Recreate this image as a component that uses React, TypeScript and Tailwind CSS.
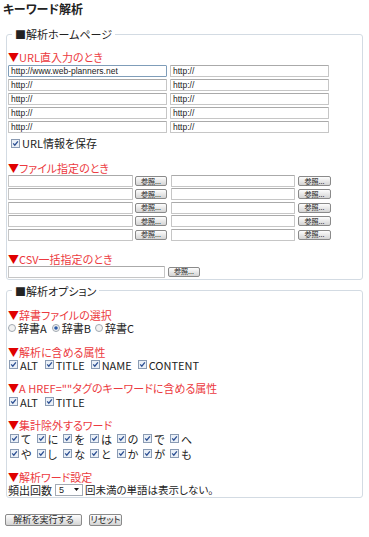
import React from "react";

function CheckBox() {
  return (
    <svg width="9" height="9" viewBox="0 0 9 9" className="shrink-0">
      <rect x="0.5" y="0.5" width="8" height="8" fill="#eaf0f7" stroke="#8a9bb3" />
      <path d="M2.2 4.4 L3.8 6.2 L6.9 2.4" fill="none" stroke="#2c4f93" strokeWidth="1.3" />
    </svg>
  );
}

function Radio({ on = false }: { on?: boolean }) {
  return (
    <svg width="8" height="8" viewBox="0 0 8 8" className="shrink-0">
      <circle cx="4" cy="4" r="3.5" fill="#f2f2f2" stroke="#a0a8b0" />
      {on && <circle cx="4" cy="4" r="1.8" fill="#2858a6" />}
    </svg>
  );
}

function Heading({ children, className = "" }: { children: React.ReactNode; className?: string }) {
  return (
    <div className={`h-[14px] leading-[14px] text-[11px] text-[#ec3a40] whitespace-nowrap ${className}`}>
      <span className="text-[#e00000]">▼</span>
      {children}
    </div>
  );
}

function TextBox({ className = "", value = "", focus = false }: { className?: string; value?: string; focus?: boolean }) {
  return (
    <div
      className={`h-[12px] shrink-0 border rounded-[1px] bg-white flex items-center pl-[2px] text-[8.5px] leading-none text-[#222] font-['Liberation_Sans',sans-serif] whitespace-nowrap overflow-hidden ${
        focus ? "border-[#7f9db9]" : "border-[#c6c6c6] border-t-[#aaaaaa]"
      } ${className}`}
    >
      {value}
    </div>
  );
}

function Btn({ children, className = "" }: { children: React.ReactNode; className?: string }) {
  return (
    <div
      className={`shrink-0 border border-[#8a8a8a] rounded-[2px] bg-linear-to-b from-[#fdfdfd] to-[#d4d4d4] flex items-center justify-center leading-none text-[#222] whitespace-nowrap ${className}`}
    >
      {children}
    </div>
  );
}

function FileRow() {
  return (
    <div className="flex h-[12px] items-center">
      <TextBox className="w-[125px]" />
      <Btn className="ml-[2px] w-[32px] h-[10px] text-[7px]">参照...</Btn>
      <TextBox className="ml-[4px] w-[124px]" />
      <Btn className="ml-[3px] w-[33px] h-[10px] text-[7px]">参照...</Btn>
    </div>
  );
}

function CheckLabel({ label, className = "" }: { label: string; className?: string }) {
  return (
    <div className={`flex items-center ${className}`}>
      <CheckBox />
      <span className="ml-[2px] text-[11px] leading-[12px]">{label}</span>
    </div>
  );
}

const row1 = ["て", "に", "を", "は", "の", "で", "へ"];
const row2 = ["や", "し", "な", "と", "か", "が", "も"];

export default function App() {
  return (
    <div className="w-[369px] h-[537px] bg-white text-[#222] font-['Noto_Sans_CJK_JP',sans-serif] [font-feature-settings:'palt'] overflow-hidden">
      <div className="h-[18px] pt-[1px] pl-[3px] text-[12px] font-bold leading-[16px]">キーワード解析</div>

      <fieldset className="mt-[9px] ml-[6px] w-[357px] border border-[#d3dbe3] rounded-[3px] pl-[1px] pb-[1px]">
        <legend className="ml-[4px] px-[3px] text-[11px] leading-[14px]">■解析ホームページ</legend>
        <Heading className="mt-[9px]">URL直入力のとき</Heading>
        <div className="mt-[1px] grid grid-cols-[159px_159px] gap-x-[3px] gap-y-[2px]">
          <TextBox focus value="http://www.web-planners.net" />
          <TextBox value="http://" />
          <TextBox value="http://" />
          <TextBox value="http://" />
          <TextBox value="http://" />
          <TextBox value="http://" />
          <TextBox value="http://" />
          <TextBox value="http://" />
          <TextBox value="http://" />
          <TextBox value="http://" />
        </div>
        <CheckLabel label="URL情報を保存" className="mt-[4px] ml-[3px] h-[12px]" />

        <Heading className="mt-[12px]">ファイル指定のとき</Heading>
        <div className="flex flex-col gap-[1.4px]">
          <FileRow />
          <FileRow />
          <FileRow />
          <FileRow />
          <FileRow />
        </div>

        <Heading className="mt-[11px]">CSV一括指定のとき</Heading>
        <div className="flex h-[12px] items-center">
          <TextBox className="w-[157px]" />
          <Btn className="ml-[3px] w-[32px] h-[10px] text-[7px]">参照...</Btn>
        </div>
      </fieldset>

      <fieldset className="mt-[4px] ml-[6px] w-[357px] border border-[#d3dbe3] rounded-[3px] pl-[1px] pb-[1px]">
        <legend className="ml-[4px] px-[3px] text-[11px] leading-[14px]">■解析オプション</legend>

        <Heading className="mt-[10px]">辞書ファイルの選択</Heading>
        <div className="flex h-[12px] items-center text-[11px] leading-[12px]">
          <Radio />
          <span className="ml-[2px]">辞書A</span>
          <span className="ml-[5px]"><Radio on /></span>
          <span className="ml-[2px]">辞書B</span>
          <span className="ml-[4px]"><Radio /></span>
          <span className="ml-[2px]">辞書C</span>
        </div>

        <Heading className="mt-[11px]">解析に含める属性</Heading>
        <div className="flex h-[12px] items-center pl-[1px]">
          <CheckLabel label="ALT" />
          <CheckLabel label="TITLE" className="ml-[7px]" />
          <CheckLabel label="NAME" className="ml-[6px]" />
          <CheckLabel label="CONTENT" className="ml-[6px]" />
        </div>

        <Heading className="mt-[10px]">A HREF=&quot;&quot;タグのキーワードに含める属性</Heading>
        <div className="mt-[1px] flex h-[12px] items-center pl-[1px]">
          <CheckLabel label="ALT" />
          <CheckLabel label="TITLE" className="ml-[7px]" />
        </div>

        <Heading className="mt-[10px]">集計除外するワード</Heading>
        <div className="mt-[1px] grid grid-cols-[repeat(7,26.67px)] gap-y-[3px] pl-[2px]">
          {row1.concat(row2).map((w, i) => (
            <CheckLabel key={i} label={w} className="h-[12px]" />
          ))}
        </div>

        <Heading className="mt-[10px]">解析ワード設定</Heading>
        <div className="flex h-[12px] items-center text-[11px] leading-[12px]">
          <span>頻出回数</span>
          <div className="ml-[3px] w-[28px] h-[12px] border border-[#a4abb4] bg-white flex items-center justify-between pl-[3px] pr-[3px] text-[9px] font-['Liberation_Sans',sans-serif]">
            <span>5</span>
            <svg width="5" height="3" viewBox="0 0 5 3">
              <path d="M0 0H5L2.5 3Z" fill="#111" />
            </svg>
          </div>
          <span className="ml-[2px] text-[10.5px]">回未満の単語は表示しない。</span>
        </div>
      </fieldset>

      <div className="mt-[16px] flex h-[12px] items-center">
        <Btn className="ml-[5px] w-[77px] h-[12px] text-[9px]">解析を実行する</Btn>
        <Btn className="ml-[7px] w-[33px] h-[12px] text-[9px]">リセット</Btn>
      </div>
    </div>
  );
}
